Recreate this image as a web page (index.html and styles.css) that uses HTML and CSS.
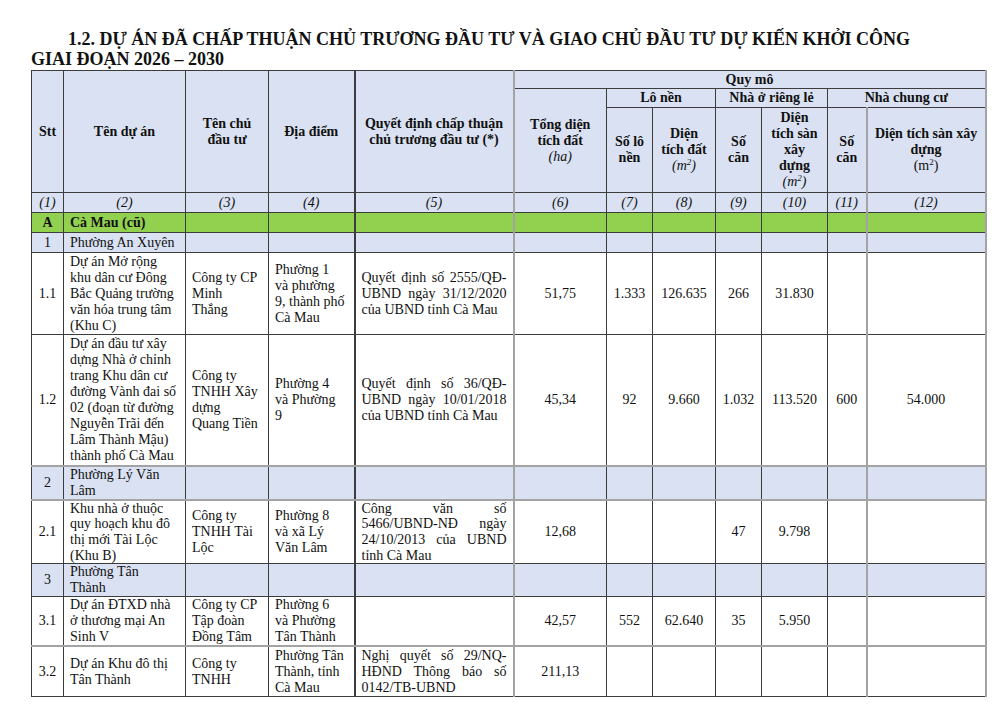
FILE: index.html
```html
<!DOCTYPE html>
<html lang="vi">
<head>
<meta charset="utf-8">
<title>Dự án đã chấp thuận chủ trương đầu tư</title>
<link rel="stylesheet" href="styles.css">
</head>
<body>
<div class="page">
  <h1 class="title">1.2. DỰ ÁN ĐÃ CHẤP THUẬN CHỦ TRƯƠNG ĐẦU TƯ VÀ GIAO CHỦ ĐẦU TƯ DỰ KIẾN KHỞI CÔNG<br>GIAI ĐOẠN 2026 – 2030</h1>
  <table class="grid">
    <colgroup>
      <col class="c1"><col class="c2"><col class="c3"><col class="c4"><col class="c5">
      <col class="c6"><col class="c7"><col class="c8"><col class="c9"><col class="c10">
      <col class="c11"><col class="c12">
    </colgroup>
    <thead>
      <tr class="h1">
        <th rowspan="3">Stt</th>
        <th rowspan="3">Tên dự án</th>
        <th rowspan="3">Tên chủ<br>đầu tư</th>
        <th rowspan="3">Địa điểm</th>
        <th rowspan="3" class="gl5">Quyết định chấp thuận<br>chủ trương đầu tư (*)</th>
        <th colspan="7" class="gl">Quy mô</th>
      </tr>
      <tr class="h2">
        <th rowspan="2" class="gl">Tổng diện<br>tích đất<br><span class="it">(ha)</span></th>
        <th colspan="2">Lô nền</th>
        <th colspan="2">Nhà ở riêng lẻ</th>
        <th colspan="2">Nhà chung cư</th>
      </tr>
      <tr class="h3">
        <th>Số lô<br>nền</th>
        <th>Diện<br>tích đất<br><span class="it">(m<sup>2</sup>)</span></th>
        <th>Số<br>căn</th>
        <th>Diện<br>tích sàn<br>xây<br>dựng<br><span class="it">(m<sup>2</sup>)</span></th>
        <th>Số<br>căn</th>
        <th class="gl">Diện tích sàn xây<br>dựng<br><span class="rg">(m<sup>2</sup>)</span></th>
      </tr>
      <tr class="idx">
        <td>(1)</td><td>(2)</td><td>(3)</td><td>(4)</td><td class="gl5">(5)</td><td class="gl">(6)</td>
        <td>(7)</td><td>(8)</td><td>(9)</td><td>(10)</td><td>(11)</td><td class="gl">(12)</td>
      </tr>
    </thead>
    <tbody>
      <tr class="sec r20">
        <td class="ctr b">A</td><td class="b">Cà Mau (cũ)</td><td></td><td></td><td class="gl5"></td><td class="gl"></td>
        <td></td><td></td><td></td><td></td><td></td><td class="gl"></td>
      </tr>
      <tr class="sub r20">
        <td class="ctr">1</td><td>Phường An Xuyên</td><td></td><td></td><td class="gl5"></td><td class="gl"></td>
        <td></td><td></td><td></td><td></td><td></td><td class="gl"></td>
      </tr>
      <tr class="r82">
        <td class="ctr">1.1</td>
        <td>Dự án Mở rộng<br>khu dân cư Đông<br>Bắc Quảng trường<br>văn hóa trung tâm<br>(Khu C)</td>
        <td>Công ty CP<br>Minh<br>Thắng</td>
        <td>Phường 1<br>và phường<br>9, thành phố<br>Cà Mau</td>
        <td class="gl5"><span class="jl">Quyết định số 2555/QĐ-</span><span class="jl">UBND ngày 31/12/2020</span>của UBND tỉnh Cà Mau</td>
        <td class="ctr gl">51,75</td><td class="ctr">1.333</td><td class="ctr">126.635</td><td class="ctr">266</td><td class="ctr">31.830</td><td></td><td class="gl"></td>
      </tr>
      <tr class="r132 gb">
        <td class="ctr">1.2</td>
        <td>Dự án đầu tư xây<br>dựng Nhà ở chỉnh<br>trang Khu dân cư<br>đường Vành đai số<br>02 (đoạn từ đường<br>Nguyễn Trãi đến<br>Lâm Thành Mậu)<br>thành phố Cà Mau</td>
        <td>Công ty<br>TNHH Xây<br>dựng<br>Quang Tiền</td>
        <td>Phường 4<br>và Phường<br>9</td>
        <td class="gl5"><span class="jl">Quyết định số 36/QĐ-</span><span class="jl">UBND ngày 10/01/2018</span>của UBND tỉnh Cà Mau</td>
        <td class="ctr gl">45,34</td><td class="ctr">92</td><td class="ctr">9.660</td><td class="ctr">1.032</td><td class="ctr">113.520</td><td class="ctr">600</td><td class="ctr gl">54.000</td>
      </tr>
      <tr class="sub r32 gb">
        <td class="ctr">2</td><td>Phường Lý Văn<br>Lâm</td><td></td><td></td><td class="gl5"></td><td class="gl"></td>
        <td></td><td></td><td></td><td></td><td></td><td class="gl"></td>
      </tr>
      <tr class="r65 tight">
        <td class="ctr">2.1</td>
        <td>Khu nhà ở thuộc<br>quy hoạch khu đô<br>thị mới Tài Lộc<br>(Khu B)</td>
        <td>Công ty<br>TNHH Tài<br>Lộc</td>
        <td>Phường 8<br>và xã Lý<br>Văn Lâm</td>
        <td class="gl5"><span class="jl">Công văn số</span><span class="jl">5466/UBND-NĐ ngày</span><span class="jl">24/10/2013 của UBND</span>tỉnh Cà Mau</td>
        <td class="ctr gl">12,68</td><td></td><td></td><td class="ctr">47</td><td class="ctr">9.798</td><td></td><td class="gl"></td>
      </tr>
      <tr class="sub r33">
        <td class="ctr">3</td><td>Phường Tân<br>Thành</td><td></td><td></td><td class="gl5"></td><td class="gl"></td>
        <td></td><td></td><td></td><td></td><td></td><td class="gl"></td>
      </tr>
      <tr class="r49 gb">
        <td class="ctr">3.1</td>
        <td>Dự án ĐTXD nhà<br>ở thương mại An<br>Sinh V</td>
        <td>Công ty CP<br>Tập đoàn<br>Đồng Tâm</td>
        <td>Phường 6<br>và Phường<br>Tân Thành</td>
        <td class="gl5"></td>
        <td class="ctr gl">42,57</td><td class="ctr">552</td><td class="ctr">62.640</td><td class="ctr">35</td><td class="ctr">5.950</td><td></td><td class="gl"></td>
      </tr>
      <tr class="r50">
        <td class="ctr">3.2</td>
        <td>Dự án Khu đô thị<br>Tân Thành</td>
        <td>Công ty<br>TNHH</td>
        <td>Phường Tân<br>Thành, tỉnh<br>Cà Mau</td>
        <td class="gl5"><span class="jl">Nghị quyết số 29/NQ-</span><span class="jl">HĐND Thông báo số</span>0142/TB-UBND</td>
        <td class="ctr gl">211,13</td><td></td><td></td><td></td><td></td><td></td><td class="gl"></td>
      </tr>
    </tbody>
  </table>
</div>
</body>
</html>
```

FILE: styles.css
```css
html, body {
  margin: 0;
  padding: 0;
  background: #ffffff;
}

.page {
  padding: 29px 0 0 31px;
  font-family: "Liberation Serif", "Times New Roman", serif;
  color: #111111;
}

.title {
  margin: 0 0 1px 0;
  font-size: 18px;
  line-height: 20px;
  font-weight: bold;
  text-indent: 37px;
  white-space: nowrap;
}

.grid {
  border-collapse: collapse;
  table-layout: fixed;
  width: 955px;
  font-size: 14px;
  line-height: 16px;
}

.c1 { width: 32px; }
.c2 { width: 122px; }
.c3 { width: 83px; }
.c4 { width: 86px; }
.c5 { width: 159px; }
.c6 { width: 93px; }
.c7 { width: 46px; }
.c8 { width: 63px; }
.c9 { width: 46px; }
.c10 { width: 66px; }
.c11 { width: 39px; }
.c12 { width: 119px; }

.grid th,
.grid td {
  border: 1px solid #3c3c3c;
  padding: 0 6px;
  vertical-align: middle;
  overflow: hidden;
}

.grid th {
  background: #d9e1f2;
  font-weight: bold;
  text-align: center;
}

.grid td {
  text-align: left;
}

.grid tr > :last-child {
  border-right: 2px solid #a3a3a3;
}

.grid .gl {
  border-left: 2px solid #a3a3a3;
}

.grid .gl5 {
  border-left: 2px solid #3c3c3c;
}

.grid tr.gb > td {
  border-bottom: 2px solid #a3a3a3;
}

.h1 { height: 18px; }
.h2 { height: 19px; }
.h3 { height: 85px; }

.idx td {
  background: #d9e1f2;
  font-style: italic;
  text-align: center;
  height: 19px;
}

.it {
  font-weight: normal;
  font-style: italic;
}

.rg {
  font-weight: normal;
}

sup {
  font-size: 9px;
  line-height: 0;
  vertical-align: 5px;
}

.sec td {
  background: #92d050;
}

.sub td {
  background: #d9e1f2;
}

.grid td.ctr {
  text-align: center;
}

.b {
  font-weight: bold;
}

.jl {
  display: block;
  text-align: justify;
  text-align-last: justify;
}

.grid tr.tight > td {
  line-height: 15.7px;
}

.r20 { height: 20px; }
.r82 { height: 82px; }
.r132 { height: 131px; }
.r32 { height: 31px; }
.r65 { height: 63px; }
.r33 { height: 32px; }
.r49 { height: 48px; }
.r50 { height: 50px; }
```
